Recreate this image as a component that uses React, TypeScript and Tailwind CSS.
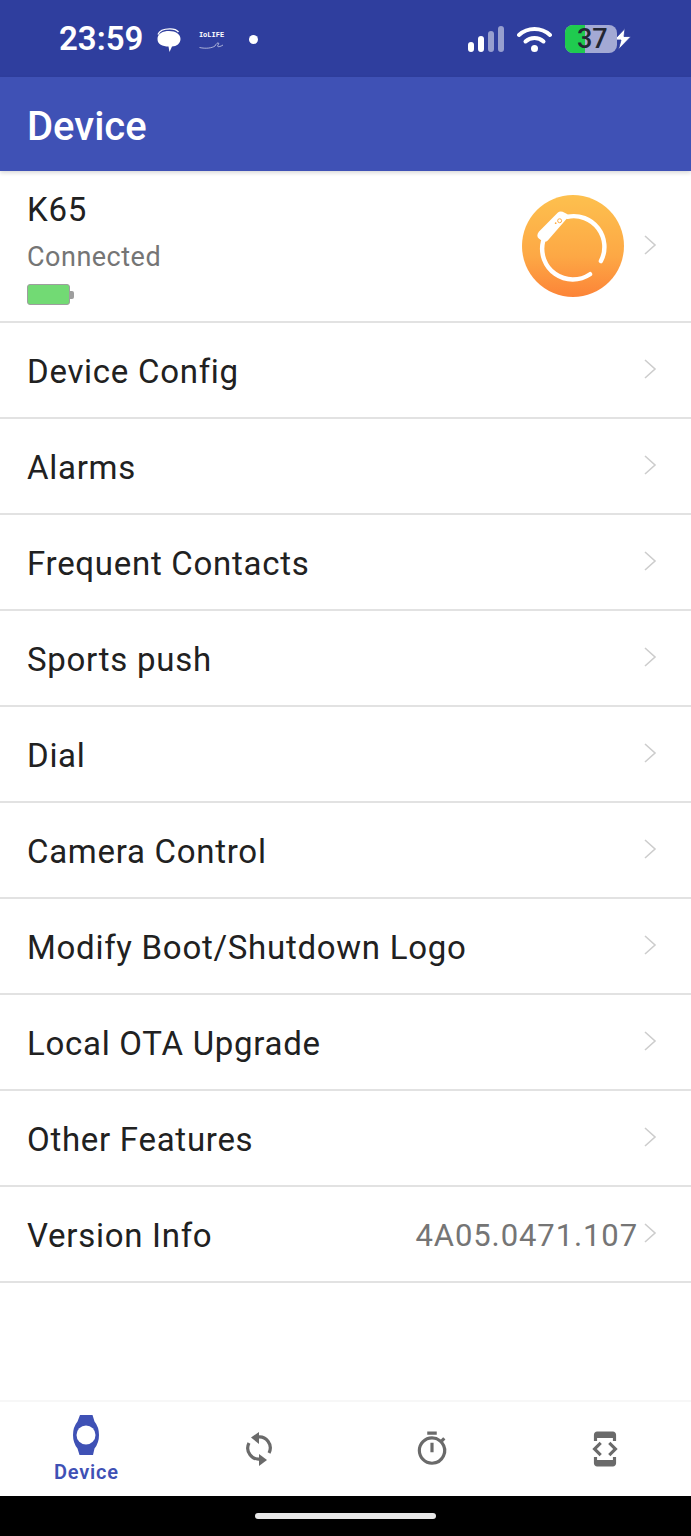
import React from "react";
import { MdDeveloperMode, MdOutlineTimer } from "react-icons/md";

const rows = [
  "Device Config",
  "Alarms",
  "Frequent Contacts",
  "Sports push",
  "Dial",
  "Camera Control",
  "Modify Boot/Shutdown Logo",
  "Local OTA Upgrade",
  "Other Features",
];

function Chevron() {
  return (
    <svg width="14" height="20" viewBox="0 0 14 20" fill="none" className="shrink-0">
      <path d="M2 1 L12 10 L2 19" stroke="#cdcdcd" strokeWidth="1.6" />
    </svg>
  );
}

function Row({ label, value }: { label: string; value?: string }) {
  return (
    <div className="flex h-[96px] items-center border-b-2 border-[#e2e2e2] pl-[27px] pr-[34px]">
      <span className="mt-[4px] flex-1 text-[33px] leading-[40px] tracking-[0.72px] text-[#212121]">{label}</span>
      {value && <span className="mr-[5px] mt-[4px] text-[31px] leading-[40px] tracking-[0.9px] text-[#757575]">{value}</span>}
      <div className="-mt-[2px]"><Chevron /></div>
    </div>
  );
}

function StatusBar() {
  return (
    <div className="flex h-[77px] items-center bg-[#2f3e9e] text-white">
      <span className="ml-[59px] w-[82px] text-[33px] font-semibold leading-none">23:59</span>
      <svg width="24" height="24" viewBox="0 0 24 24" className="ml-[16px] mt-[2px]">
        <path d="M1 6.5 C2.5 2 8 0.8 13 0.8 C17 0.8 20 2 21.5 4" fill="none" stroke="white" strokeWidth="1.3" />
        <path d="M0.5 11 C0.5 5.5 6 3 12 3 C19 3 23.5 6.5 23.5 11 C23.5 15.5 19.5 18.5 15 18.5 L12.5 24 L11.5 18.5 C5.5 18.5 0.5 16.5 0.5 11Z" fill="white" />
      </svg>
      <div className="ml-[18px] mt-[4px] flex w-[25px] flex-col items-center">
        <span className="font-['Liberation_Mono'] text-[7px] font-bold leading-[7px]">IoLIFE</span>
        <svg width="25" height="8" viewBox="0 0 25 8" fill="none" className="mt-[2px]">
          <path d="M0.5 6.5 C7 8 13 7 16 5 C18 1 21 1 19 4 C17.5 6.5 21 6 24 4" stroke="white" strokeWidth="0.7" opacity="0.85" />
        </svg>
      </div>
      <div className="ml-[25px] mt-[2px] h-[9px] w-[9px] rounded-full bg-white" />
      <div className="flex-1" />
      <div className="mr-[13px] flex items-end gap-[4px]">
        <div className="h-[10px] w-[6px] rounded-full bg-white" />
        <div className="h-[16px] w-[6px] rounded-full bg-white" />
        <div className="h-[21px] w-[6px] rounded-full bg-white/50" />
        <div className="h-[26px] w-[6px] rounded-full bg-white/50" />
      </div>
      <svg width="35" height="26" viewBox="0 0 35 26" className="mr-[13px]">
        <path d="M2 9 A23 23 0 0 1 33 9" fill="none" stroke="white" strokeWidth="4" strokeLinecap="round" />
        <path d="M8.5 15.5 A13 13 0 0 1 26.5 15.5" fill="none" stroke="white" strokeWidth="4" strokeLinecap="round" />
        <circle cx="17.5" cy="22.5" r="3.5" fill="white" />
      </svg>
      <div className="relative flex h-[28px] w-[52px] rounded-[8px] bg-[#a3a9d4]">
        <div className="h-full w-[20px] rounded-l-[8px] bg-[#1fcb4f]" />
        <span className="absolute left-[12px] top-[0px] text-[27px] font-medium leading-[28px] text-[#232732]">37</span>
      </div>
      <svg width="19" height="22" viewBox="0 0 19 22" className="ml-[-4px] mr-[59px]">
        <path d="M12 0.5 L1 12 H8 L5.5 21.5 L18 8.5 H11 Z" fill="white" stroke="#2f3e9e" strokeWidth="0.8" />
      </svg>
    </div>
  );
}

function NavIcon({ children }: { children: React.ReactNode }) {
  return <div className="flex flex-1 items-center justify-center">{children}</div>;
}

export default function App() {
  return (
    <div className="flex h-[1536px] w-[691px] flex-col overflow-hidden bg-white font-['Roboto',sans-serif]">
      <StatusBar />
      <div className="flex h-[94px] items-center bg-[#3f51b5] pl-[27px] pt-[6px] shadow-[0_2px_4px_rgba(0,0,0,0.15)]">
        <span className="text-[40px] font-medium leading-none text-white">Device</span>
      </div>
      <div className="flex h-[152px] items-center border-b-2 border-[#e2e2e2] pl-[27px] pr-[34px]">
        <div className="flex flex-1 flex-col self-start pt-[20px]">
          <span className="text-[33px] leading-[38px] tracking-[0.72px] text-[#212121]">K65</span>
          <span className="mt-[13px] text-[27px] leading-[30px] tracking-[0.5px] text-[#757575]">Connected</span>
          <div className="mt-[12px] flex items-center">
            <div className="h-[21px] w-[43px] rounded-[3px] border border-[#9e9e9e] bg-[#72da74]" />
            <div className="h-[8px] w-[4px] rounded-r-[2px] bg-[#9e9e9e]" />
          </div>
        </div>
        <svg width="102" height="102" viewBox="0 0 103 103" className="mr-[19px]">
          <defs>
            <linearGradient id="og" x1="0" y1="0" x2="0" y2="1">
              <stop offset="0" stopColor="#fdc04e" />
              <stop offset="0.6" stopColor="#fda845" />
              <stop offset="1" stopColor="#fc8438" />
            </linearGradient>
          </defs>
          <circle cx="51.5" cy="51.5" r="51.5" fill="url(#og)" />
          <path d="M46 22 A31 31 0 0 1 79.7 66.7" fill="none" stroke="white" strokeWidth="4.5" strokeLinecap="round" />
          <path d="M68.7 80 A31 31 0 0 1 21.3 46.7" fill="none" stroke="white" strokeWidth="4.5" strokeLinecap="round" />
          <path d="M17 37 L36 18 Q38 16 41 17 L45 19 Q47 20 46 23 L26 46 Q24 48 21 47 L17 44 Q14 41 17 37Z" fill="white" />
          <circle cx="38" cy="26" r="2" fill="none" stroke="#fdab45" strokeWidth="1" />
          <circle cx="34" cy="28.5" r="0.9" fill="#fdab45" />
        </svg>
        <div className="-mt-[2px]"><Chevron /></div>
      </div>
      {rows.map((r) => (
        <Row key={r} label={r} />
      ))}
      <Row label="Version Info" value="4A05.0471.107" />
      <div className="flex-1" />
      <div className="flex h-[96px] border-t-2 border-[#f7f7f7] bg-white">
        <div className="flex flex-1 flex-col items-center pt-[13px]">
          <svg width="26" height="40" viewBox="0 0 26 40">
            <path d="M7 0 H19.5 L21.5 6.5 Q26 12 26 20 Q26 28 21.5 33.5 L20 40 H6.5 L4.5 33.5 Q0 28 0 20 Q0 12 4.5 6.5 Z" fill="#3f51b5" />
            <circle cx="13" cy="20" r="9.5" fill="white" />
          </svg>
          <span className="mt-[6px] text-[20px] font-semibold leading-[22px] tracking-[0.8px] text-[#3f51b5]">Device</span>
        </div>
        <NavIcon>
          <svg width="30" height="38" viewBox="0 0 30 38" fill="none">
            <path d="M13 7.2 A11 11 0 0 1 25 23" stroke="#6a6a6a" strokeWidth="3.2" />
            <path d="M15 2 L15 14 L7 7.5 Z" fill="#6a6a6a" />
            <path d="M17 28.8 A11 11 0 0 1 5 13" stroke="#6a6a6a" strokeWidth="3.2" />
            <path d="M15 24 L15 36 L23 30 Z" fill="#6a6a6a" />
          </svg>
        </NavIcon>
        <NavIcon>
          <MdOutlineTimer size={38} color="#6a6a6a" />
        </NavIcon>
        <NavIcon>
          <MdDeveloperMode size={38} color="#6a6a6a" />
        </NavIcon>
      </div>
      <div className="flex h-[40px] justify-center bg-black pt-[17px]">
        <div className="h-[6px] w-[181px] rounded-full bg-[#e8e8e8]" />
      </div>
    </div>
  );
}
